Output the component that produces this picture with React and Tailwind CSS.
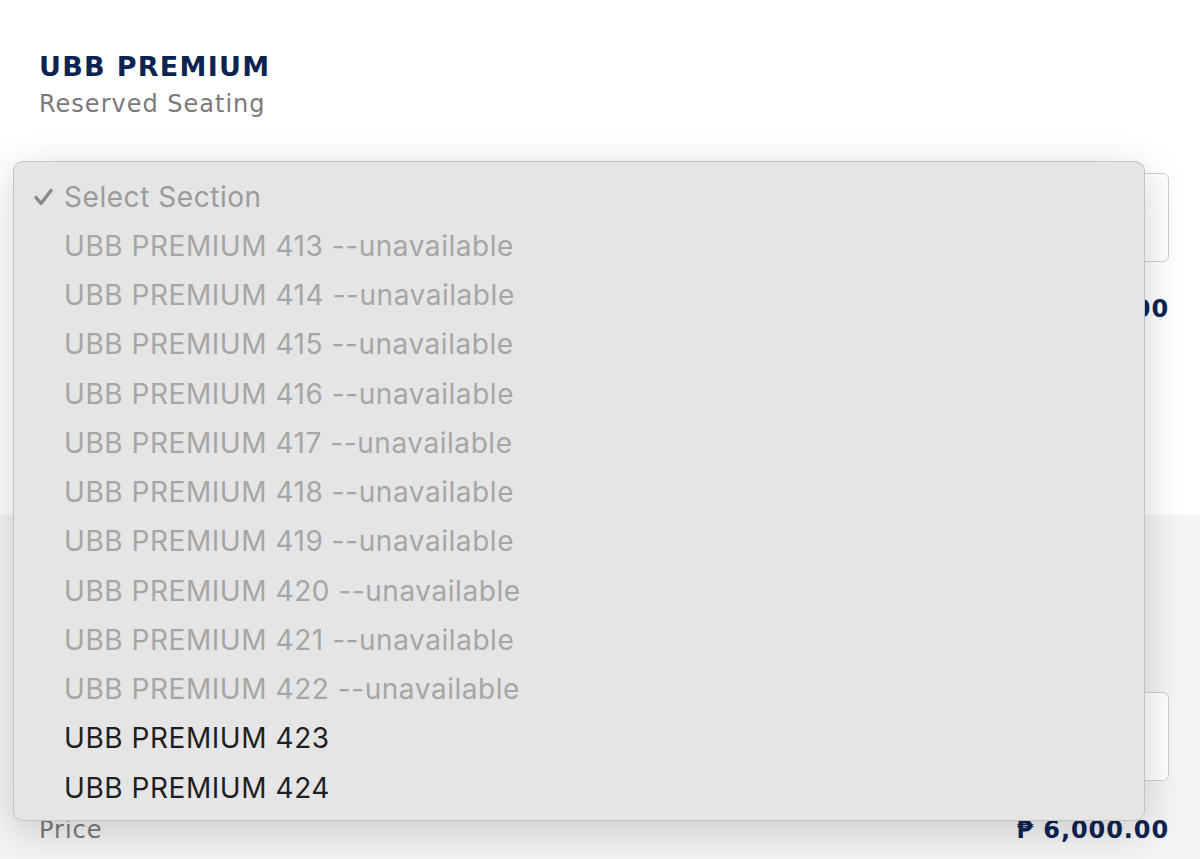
import React from "react";

const items = [
  { label: "UBB PREMIUM 413 --unavailable", disabled: true },
  { label: "UBB PREMIUM 414 --unavailable", disabled: true },
  { label: "UBB PREMIUM 415 --unavailable", disabled: true },
  { label: "UBB PREMIUM 416 --unavailable", disabled: true },
  { label: "UBB PREMIUM 417 --unavailable", disabled: true },
  { label: "UBB PREMIUM 418 --unavailable", disabled: true },
  { label: "UBB PREMIUM 419 --unavailable", disabled: true },
  { label: "UBB PREMIUM 420 --unavailable", disabled: true },
  { label: "UBB PREMIUM 421 --unavailable", disabled: true },
  { label: "UBB PREMIUM 422 --unavailable", disabled: true },
  { label: "UBB PREMIUM 423", disabled: false },
  { label: "UBB PREMIUM 424", disabled: false },
];

export default function App() {
  return (
    <div className="relative w-[1200px] h-[859px] overflow-hidden bg-white" style={{ fontFamily: "'DejaVu Sans', sans-serif" }}>
      {/* Card 1 */}
      <div className="h-[515px] bg-white px-[31px] pt-[50px]">
        <div className="pl-[8px] text-[27px] font-bold text-[#0c2452] leading-[34px] tracking-[1.3px]">UBB PREMIUM</div>
        <div className="pl-[8px] mt-[4px] text-[24px] text-[#7a7a7a] leading-[32px] tracking-[1px]">Reserved Seating</div>
        <div className="mt-[53px] h-[89px] w-full rounded-[6px] border border-[#cfcfcf] bg-white" />
        <div className="mt-[32px] flex justify-between pl-[8px] text-[24px] leading-[30px]">
          <span className="text-[#7a7a7a] tracking-[1px]">Price</span>
          <span className="font-bold text-[#0c2452] tracking-[0.9px]">₱ 4,000.00</span>
        </div>
      </div>
      {/* Card 2 */}
      <div className="h-[344px] bg-[#f4f4f4] px-[31px] pt-[177px]">
        <div className="h-[89px] w-full rounded-[6px] border border-[#cfcfcf] bg-white" />
        <div className="mt-[34px] flex justify-between pl-[8px] text-[24px] leading-[30px]">
          <span className="text-[#7a7a7a] tracking-[1px]">Price</span>
          <span className="font-bold text-[#0c2452] tracking-[0.9px]">₱ 6,000.00</span>
        </div>
      </div>

      {/* Native select dropdown overlay */}
      <div
        className="absolute left-[13px] top-[161px] w-[1132px] h-[660px] rounded-[10px] border border-[#c4c4c4] bg-[#e5e5e5] pt-[10px] shadow-[0_10px_40px_rgba(0,0,0,0.18)]"
        style={{ fontFamily: "Inter, 'Liberation Sans', sans-serif" }}
      >
        <div className="relative flex h-[49.25px] items-center pl-[50px] text-[28px] tracking-[0.55px] text-[#9b9b9b]">
          <svg className="absolute left-[20px] top-[16px]" width="19" height="18" viewBox="0 0 19 18">
            <path d="M2 9.5 L7 15.5 L17 2.5" fill="none" stroke="#8a8a8a" strokeWidth="3.4" strokeLinecap="round" strokeLinejoin="round" />
          </svg>
          Select Section
        </div>
        {items.map((it) => (
          <div
            key={it.label}
            className={`flex h-[49.25px] items-center pl-[50px] text-[28px] tracking-[0.55px] ${it.disabled ? "text-[#a6a6a6]" : "text-[#1f1f1f]"}`}
          >
            {it.label}
          </div>
        ))}
      </div>
    </div>
  );
}
